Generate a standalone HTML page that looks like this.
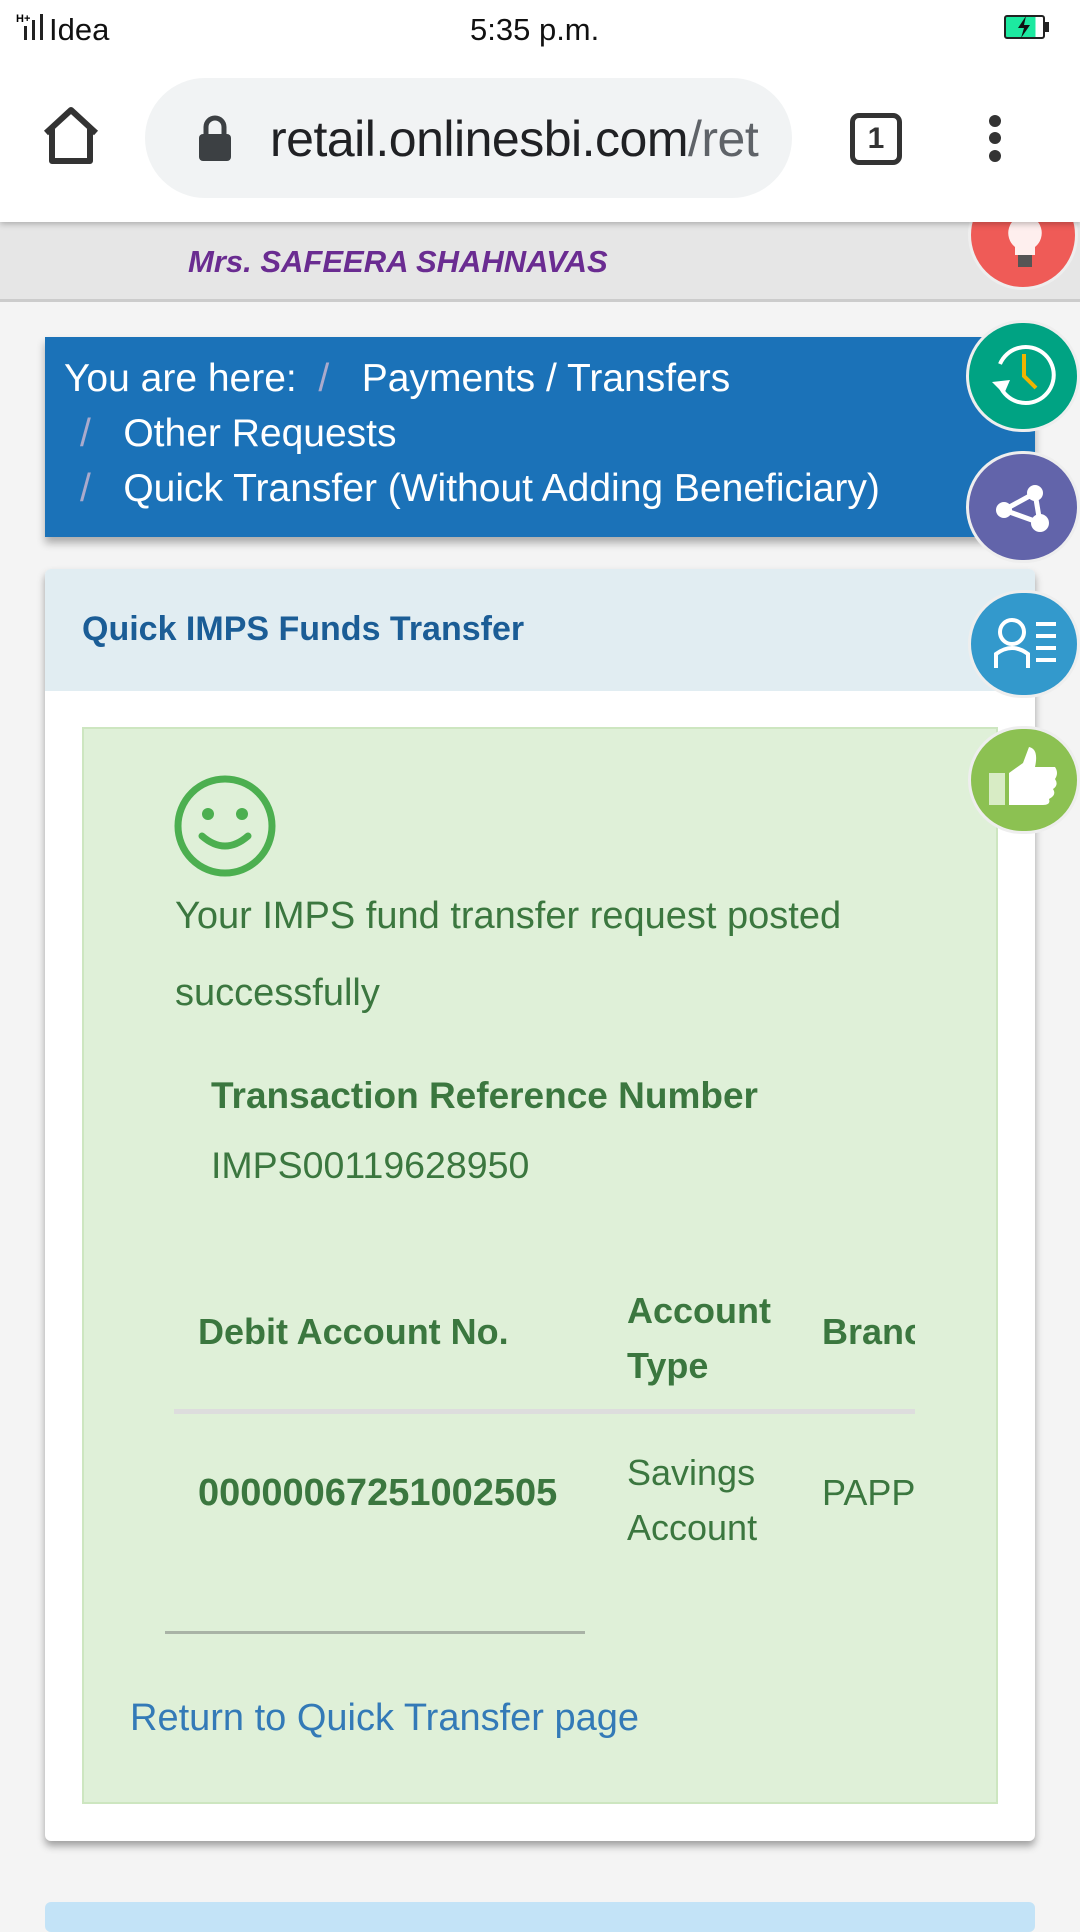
<!DOCTYPE html>
<html><head><meta charset="utf-8"><style>
*{margin:0;padding:0;box-sizing:border-box}
body{width:1080px;height:1920px;background:#f4f4f4;font-family:"Liberation Sans",sans-serif;position:relative;overflow:hidden}
.a{position:absolute;white-space:nowrap}
.g{color:#3b773f}
</style></head><body>
<div class="a" style="left:0;top:0;width:1080px;height:222px;background:#fff;box-shadow:0 2px 6px rgba(0,0,0,.25);z-index:3">
  <div class="a" style="left:16px;top:14px;font-size:11px;font-weight:bold;line-height:10px">H+</div>
  <div class="a" style="left:24px;top:26px;width:3px;height:14px;background:#222"></div>
  <div class="a" style="left:32px;top:20px;width:3px;height:20px;background:#222"></div>
  <div class="a" style="left:40px;top:14px;width:3px;height:26px;background:#222"></div>
  <div class="a" style="left:49px;top:12px;font-size:31px;color:#111">Idea</div>
  <div class="a" style="left:470px;top:12px;font-size:31px;color:#111">5:35 p.m.</div>
  <div class="a" style="left:1004px;top:15px;width:41px;height:24px;border:2px solid #222;border-radius:3px;background:linear-gradient(90deg,#1de9a0 0,#1de9a0 80%,#fff 80%)"></div>
  <div class="a" style="left:1045px;top:22px;width:4px;height:10px;background:#222"></div>
  <svg class="a" style="left:1014px;top:16px" width="20" height="22" viewBox="0 0 20 22"><path d="M12 0 L4 12 H10 L7 22 L16 9 H10z" fill="#111"/></svg>
  <svg class="a" style="left:40px;top:105px" width="62" height="62" viewBox="0 0 62 62"><path d="M6 28 L31 5 L56 28 M12 24 V56 H50 V24" fill="none" stroke="#333" stroke-width="6" stroke-linejoin="round"/></svg>
  <div class="a" style="left:145px;top:78px;width:647px;height:120px;border-radius:60px;background:#f1f3f4"></div>
  <svg class="a" style="left:195px;top:114px" width="40" height="48" viewBox="0 0 40 48"><rect x="4" y="20" width="32" height="27" rx="4" fill="#3c4043"/><path d="M11 21 V13 a9 9 0 0 1 18 0 V21" fill="none" stroke="#3c4043" stroke-width="5"/></svg>
  <div class="a" style="left:270px;top:110px;font-size:50px;color:#202124;letter-spacing:-0.5px;width:492px;overflow:hidden">retail.onlinesbi.com<span style="color:#5f6368">/ret</span></div>
  <div class="a" style="left:850px;top:113px;width:52px;height:52px;border:5px solid #333;border-radius:9px;font-size:30px;font-weight:bold;text-align:center;line-height:42px;color:#333">1</div>
  <div class="a" style="left:989px;top:115px;width:12px;height:12px;border-radius:6px;background:#333"></div>
  <div class="a" style="left:989px;top:132px;width:12px;height:12px;border-radius:6px;background:#333"></div>
  <div class="a" style="left:989px;top:150px;width:12px;height:12px;border-radius:6px;background:#333"></div>
</div>
<div class="a" style="left:0;top:200px;width:1080px;height:102px;background:#e6e6e6;border-bottom:3px solid #ccc"></div>
<div class="a" style="left:188px;top:244px;font-size:31px;font-weight:bold;font-style:italic;color:#6a2c91">Mrs. SAFEERA SHAHNAVAS</div>
<div class="a" style="left:45px;top:337px;width:990px;height:200px;background:#1b72b8;box-shadow:0 6px 8px rgba(0,0,0,.3);color:#fff;font-size:39px">
  <div class="a" style="left:19px;top:20px">You are here: <span style="color:#aac">&nbsp;/&nbsp;</span>&nbsp; Payments / Transfers</div>
  <div class="a" style="left:35px;top:75px"><span style="color:#aac">/</span>&nbsp;&nbsp; Other Requests</div>
  <div class="a" style="left:35px;top:130px"><span style="color:#aac">/</span>&nbsp;&nbsp; Quick Transfer (Without Adding Beneficiary)</div>
</div>
<div class="a" style="left:45px;top:569px;width:990px;height:1272px;background:#fff;border-radius:6px;box-shadow:0 5px 8px rgba(0,0,0,.35);overflow:hidden">
  <div class="a" style="left:0;top:0;width:990px;height:122px;background:#e1edf2"></div>
  <div class="a" style="left:37px;top:41px;font-size:34px;font-weight:bold;color:#1b5d96">Quick IMPS Funds Transfer</div>
  <div class="a" style="left:37px;top:158px;width:916px;height:1077px;background:#dff0d8;border:2px solid #cde6c0"></div>
</div>
<svg class="a" style="left:173px;top:774px" width="104" height="104" viewBox="0 0 104 104"><circle cx="52" cy="52" r="47" fill="none" stroke="#4caf50" stroke-width="7"/><circle cx="35" cy="40" r="6" fill="#4caf50"/><circle cx="69" cy="40" r="6" fill="#4caf50"/><path d="M29 62 Q52 82 75 62" fill="none" stroke="#4caf50" stroke-width="7" stroke-linecap="round"/></svg>
<div class="a g" style="left:175px;top:895px;font-size:38px">Your IMPS fund transfer request posted</div>
<div class="a g" style="left:175px;top:972px;font-size:38px">successfully</div>
<div class="a g" style="left:211px;top:1075px;font-size:37px;font-weight:bold">Transaction Reference Number</div>
<div class="a g" style="left:211px;top:1144px;font-size:37.5px">IMPS00119628950</div>
<div class="a" style="left:174px;top:1283px;width:741px;height:260px;overflow:hidden">
  <div class="a g" style="left:24px;top:28px;font-size:36px;font-weight:bold">Debit Account No.</div>
  <div class="a g" style="left:453px;top:0;font-size:36px;font-weight:bold;line-height:55px">Account<br>Type</div>
  <div class="a g" style="left:648px;top:28px;font-size:36px;font-weight:bold">Branch</div>
  <div class="a" style="left:0;top:126px;width:741px;height:5px;background:#ddd"></div>
  <div class="a g" style="left:24px;top:189px;font-size:38px;font-weight:bold">00000067251002505</div>
  <div class="a g" style="left:453px;top:162px;font-size:36px;line-height:55px">Savings<br>Account</div>
  <div class="a g" style="left:648px;top:189px;font-size:36px">PAPPINISSERY</div>
</div>
<div class="a" style="left:165px;top:1631px;width:420px;height:3px;background:#a9b3a6"></div>
<div class="a" style="left:130px;top:1697px;font-size:38px;color:#337ab7">Return to Quick Transfer page</div>
<div class="a" style="left:45px;top:1902px;width:990px;height:30px;background:#c3e3f7;border-radius:6px"></div>
<div class="a" style="left:968px;top:180px;width:110px;height:110px;border-radius:55px;background:#ef5b57;border:3px solid #eee;z-index:2"></div>
<svg class="a" style="left:1000px;top:215px;z-index:2" width="50" height="60" viewBox="0 0 50 60"><path d="M25 0 a18 18 0 0 1 10 32 v8 h-20 v-8 A18 18 0 0 1 25 0z" fill="#fff" opacity=".9"/><rect x="18" y="40" width="14" height="12" fill="#555"/></svg>
<div class="a" style="left:966px;top:320px;width:114px;height:112px;border-radius:57px;background:#00a383;border:3px solid #eee"></div>
<svg class="a" style="left:986px;top:338px" width="76" height="76" viewBox="0 0 76 76"><path d="M14 48 A28 28 0 1 0 14 26" fill="none" stroke="#fff" stroke-width="4"/><path d="M6 44 L18 56 L24 42z" fill="#fff"/><path d="M38 16 V38 L50 50" fill="none" stroke="#f0b400" stroke-width="4"/></svg>
<div class="a" style="left:966px;top:451px;width:114px;height:112px;border-radius:57px;background:#6264aa;border:3px solid #eee"></div>
<svg class="a" style="left:990px;top:475px" width="70" height="70" viewBox="0 0 70 70"><path d="M14 35 L45 18 L50 48z" fill="none" stroke="#fff" stroke-width="5"/><circle cx="14" cy="35" r="8" fill="#fff"/><circle cx="45" cy="18" r="8" fill="#fff"/><circle cx="50" cy="48" r="9" fill="#fff"/></svg>
<div class="a" style="left:968px;top:590px;width:112px;height:108px;border-radius:56px;background:#3399cc;border:3px solid #eee"></div>
<svg class="a" style="left:990px;top:612px" width="70" height="60" viewBox="0 0 70 60"><circle cx="22" cy="20" r="12" fill="none" stroke="#fff" stroke-width="4"/><path d="M6 56 V42 Q22 30 38 42 V56" fill="none" stroke="#fff" stroke-width="4"/><path d="M46 12 H66 M46 24 H66 M46 36 H66 M46 48 H66" stroke="#fff" stroke-width="4"/></svg>
<div class="a" style="left:968px;top:726px;width:112px;height:108px;border-radius:56px;background:#8cc152;border:3px solid #eee"></div>
<svg class="a" style="left:985px;top:745px" width="76" height="66" viewBox="0 0 76 66"><rect x="4" y="28" width="16" height="32" fill="#d8ecc5"/><path d="M24 28 L38 18 L44 2 Q54 4 50 22 H70 Q74 28 70 34 Q74 40 68 44 Q72 50 64 54 Q66 60 58 60 H24z" fill="#fff"/></svg>
</body></html>
